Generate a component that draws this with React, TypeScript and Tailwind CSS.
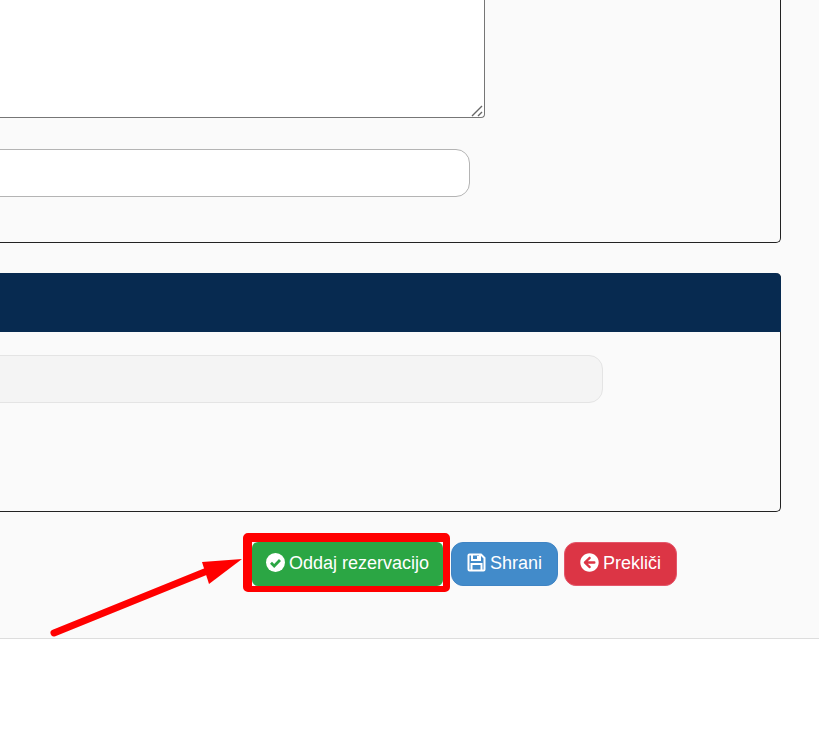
import { FaArrowCircleLeft } from 'react-icons/fa';

function App() {
  return (
    <div className="relative h-[736px] w-[819px] overflow-hidden bg-white font-['Liberation_Sans',Arial,sans-serif]">
      <div className="h-[639px] border-b border-[#dddddd] bg-[#fafafa]">
        {/* Notes panel */}
        <div className="-ml-5 h-[243px] w-[801px] rounded-b-[5px] border border-t-0 border-[#222222] pl-px">
          <div className="relative h-[118px] w-[503px]">
            <textarea
              readOnly
              className="block h-full w-full resize-none rounded-b-[4px] border border-t-0 border-[#767676] bg-white"
            />
            <svg className="absolute bottom-0 right-0" width="16" height="16" fill="none" stroke="#666666" strokeWidth="1.4">
              <path d="M3 14 L13 4 M9 14 L13 10" />
            </svg>
          </div>
          <div className="mt-[31px] h-12 w-[488px] rounded-r-[14px] border border-[#b4b4b4] bg-white" />
        </div>

        {/* Second panel */}
        <div className="-ml-5 mt-[30px] h-[239px] w-[801px] rounded-[5px] border border-t-0 border-[#222222]">
          <div className="-mx-px h-[59px] rounded-t-[5px] bg-[#072a50]" />
          <div className="mt-[23px] h-12 w-[622px] rounded-r-[14px] border border-[#e4e4e4] bg-[#f4f4f4]" />
        </div>

        {/* Actions */}
        <div className="mt-[30px] flex pl-[252px] text-[18px] leading-none text-white">
          <button className="relative flex h-11 w-[191px] items-center justify-center gap-[4px] rounded-md bg-[#2ba644] pb-[3px]">
            <svg width="19" height="19" viewBox="0 0 19 19">
              <circle cx="9.5" cy="9.5" r="9.5" fill="currentColor" />
              <path d="M5 9.8 L8.2 13 L14 7" fill="none" stroke="#2ba644" strokeWidth="2.8" />
            </svg>
            Oddaj rezervacijo
            <span className="absolute -bottom-[6px] -left-[9px] -right-[7px] -top-[9px] rounded-[5px] border-b-[6px] border-l-[9px] border-r-[7px] border-t-[9px] border-[#ff0000]" />
          </button>
          <button className="ml-2 flex h-11 w-[107px] items-center justify-center gap-[4px] rounded-xl border border-[#3f84c4] bg-[#428bca] pb-[3px]">
            <svg width="19" height="19" viewBox="0 0 19 19" fill="none" stroke="currentColor" strokeWidth="2">
              <path d="M1.5 2.5 a1 1 0 0 1 1 -1 H14 L17.5 5 V16.5 a1 1 0 0 1 -1 1 H2.5 a1 1 0 0 1 -1 -1 Z" />
              <path d="M5 2 V7 H13 V2 M11 3 V6" />
              <path d="M4.5 17 V11 H14.5 V17" />
            </svg>
            Shrani
          </button>
          <button className="ml-1.5 flex h-11 w-[113px] items-center justify-center gap-[4px] rounded-xl border border-[#e4566a] bg-[#dc3545] pb-[3px]">
            <FaArrowCircleLeft className="h-[19px] w-[19px]" />
            Prekliči
          </button>
        </div>
      </div>

      {/* Annotation arrow */}
      <svg className="absolute left-0 top-0" width="819" height="736" fill="none">
        <path d="M54 633 L212 569" stroke="#ff0000" strokeWidth="7" strokeLinecap="round" />
        <path d="M202 562 L242 559 L209 584 Z" fill="#ff0000" />
      </svg>
    </div>
  );
}

export default App;
